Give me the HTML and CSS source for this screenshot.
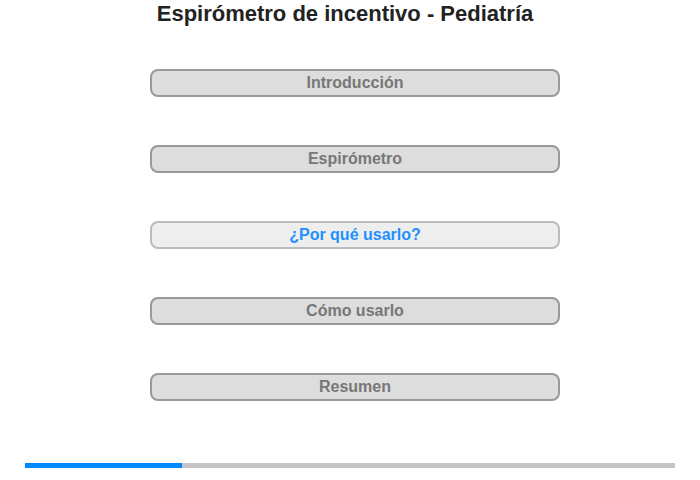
FILE: index.html
```html
<!DOCTYPE html>
<html lang="es">
<head>
  <meta charset="UTF-8" />
  <title>Espirómetro de incentivo - Pediatría</title>
  <link rel="stylesheet" href="styles.css">
</head>
<body>
  <div class="page">
    <h1>Espirómetro de incentivo - Pediatría</h1>
    <nav class="menu">
      <div class="item">Introducción</div>
      <div class="item">Espirómetro</div>
      <div class="item active">¿Por qué usarlo?</div>
      <div class="item">Cómo usarlo</div>
      <div class="item">Resumen</div>
    </nav>
    <div class="progress"><div class="bar" style="width: 24.2%"></div></div>
  </div>
</body>
</html>
```

FILE: styles.css
```css
body {
  margin: 0;
  font-family: 'Liberation Sans', Arial, sans-serif;
  background: #fff;
}
.page {
  width: 700px;
  height: 480px;
  display: flex;
  flex-direction: column;
  align-items: center;
}
h1 {
  margin: 1px 0 0 -10px;
  font-size: 22px;
  line-height: 26px;
  font-weight: bold;
  color: #222;
}
.menu {
  margin: 42px 0 0 10px;
  display: flex;
  flex-direction: column;
  gap: 48px;
}
.item {
  width: 406px;
  height: 24px;
  line-height: 24px;
  border: 2px solid #999;
  border-radius: 8px;
  background: #ddd;
  color: #777;
  text-align: center;
  font-size: 16px;
  font-weight: bold;
}
.item.active {
  border-color: #bbb;
  background: #eee;
  color: #1e90ff;
}
.progress {
  margin-top: 62px;
  width: 650px;
  height: 5px;
  background: #c4c4c4;
}
.bar {
  height: 100%;
  background: #0088ff;
}
```
